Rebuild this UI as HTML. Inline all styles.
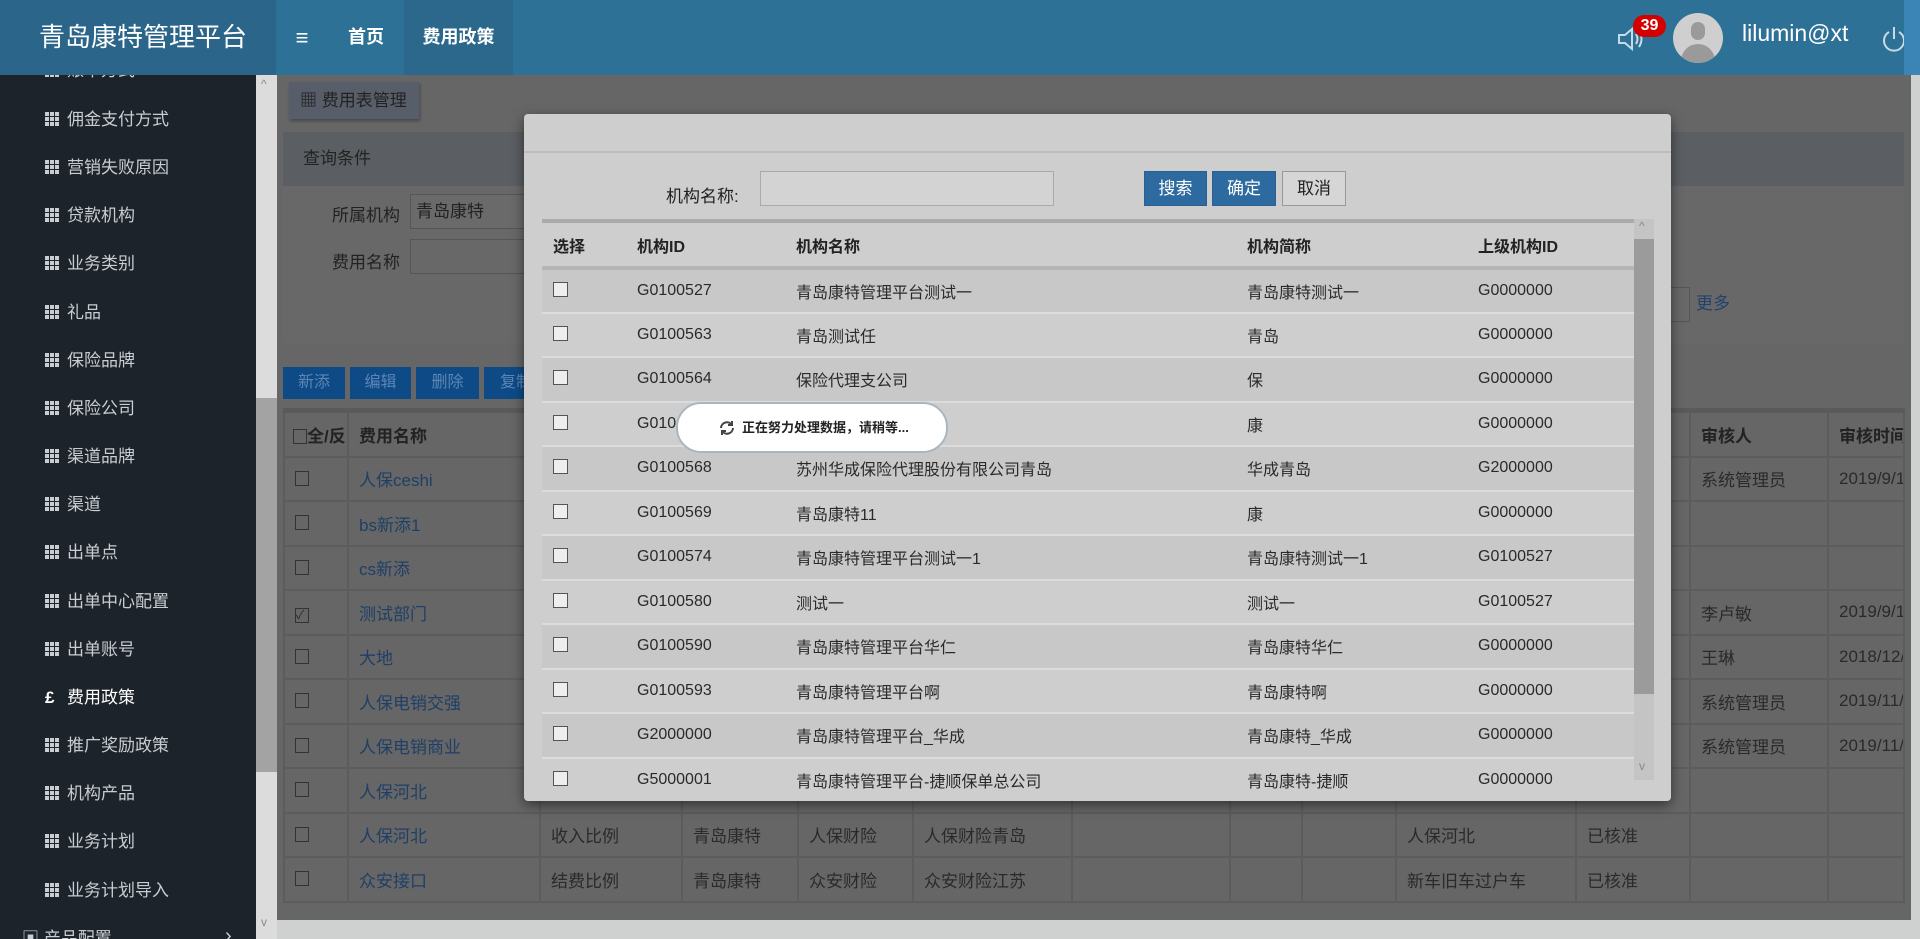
<!DOCTYPE html>
<html><head><meta charset="utf-8"><style>
*{margin:0;padding:0;box-sizing:border-box}
body{width:1920px;height:939px;overflow:hidden;position:relative;background:#666;font-family:"Liberation Sans","Noto Sans CJK SC",sans-serif;}
.a{position:absolute}
#hdr{left:0;top:0;width:1920px;height:75px;background:#2e7196}
#logo{left:0;top:0;width:276px;height:75px;background:#2b6589;color:#fff;font-size:26px;line-height:75px;padding-left:39px}
.nav{top:0;height:75px;line-height:75px;color:#fff;font-size:18px;font-weight:bold;text-align:center}
#side{left:0;top:75px;width:256px;height:864px;background:#1c232a;overflow:hidden}
.si{position:absolute;left:45px;color:#c9cdd1;font-size:17px;height:24px;line-height:24px}
.si i{display:inline-block;width:14px;height:14px;margin-right:8px;vertical-align:-1px;background:
linear-gradient(90deg,#c9cdd1 0 4px,transparent 4px 5px,#c9cdd1 5px 9px,transparent 9px 10px,#c9cdd1 10px 14px);
-webkit-mask:linear-gradient(#000 0 4px,transparent 4px 5px,#000 5px 9px,transparent 9px 10px,#000 10px 14px)}
#vs{left:256px;top:75px;width:21px;height:864px;background:#dcdcdc}
table{border-collapse:collapse;table-layout:fixed}
#bt{left:283px;top:408px;width:1621px;font-size:17px;color:#2a2a2a}
#bt td{height:44.5px;border:2px solid #5c5c5c;padding-left:10px;white-space:nowrap;overflow:hidden}
#bt tr.h td{height:46px;font-weight:bold;border-top:5px solid #5a5a5a;color:#222}
.lk{color:#1f3f66}
.cb{display:inline-block;width:14px;height:15px;border:1px solid #333;vertical-align:-2px}
#modal{left:524px;top:114px;width:1147px;height:687px;background:#cecece;border-radius:4px;box-shadow:0 4px 12px rgba(0,0,0,.5)}
#mt{position:absolute;left:18px;top:105px;width:1092px;font-size:16px;color:#2a2a2a}
#mt td{height:44.5px;border-bottom:2px solid #dcdcdc;white-space:nowrap;padding-left:11px}
#mt tr:nth-child(even) td{background:#c8c8c8}
#mt tr.h td{height:47px;font-weight:bold;border-top:4px solid #aaa;border-bottom:4px solid #b5b5b5;background:#cecece;color:#222}
.mcb{display:inline-block;width:15px;height:15px;border:1px solid #555;background:#eee;vertical-align:-2px}
.btn{position:absolute;top:57px;height:35px;line-height:33px;text-align:center;font-size:17px;border:1px solid #999}
</style></head><body>
<div id="hdr" class="a"></div>
<div id="logo" class="a">青岛康特管理平台</div>
<div class="a nav" style="left:276px;width:52px;font-size:22px">&#8801;</div>
<div class="a nav" style="left:328px;width:76px">首页</div>
<div class="a nav" style="left:404px;width:109px;background:#2b688c">费用政策</div>
<svg class="a" style="left:1616px;top:24px" width="30" height="30" viewBox="0 0 30 30" fill="none" stroke="#c7dbe6" stroke-width="2"><path d="M3 11h6l7-6v20l-7-6H3z"/><path d="M20 10q3 5 0 10M23 7q5 8 0 16"/></svg>
<div class="a" style="left:1633px;top:15px;width:33px;height:22px;border-radius:11px;background:#d40000;color:#fff;font-weight:bold;font-size:16px;line-height:22px;text-align:center">39</div>
<div class="a" style="left:1673px;top:13px;width:50px;height:50px;border-radius:50%;background:#cfcfcf;overflow:hidden"><div class="a" style="left:18px;top:9px;width:14px;height:18px;border-radius:7px;background:#9a9a9a"></div><div class="a" style="left:8px;top:31px;width:34px;height:26px;border-radius:17px 17px 0 0;background:#9a9a9a"></div></div>
<div class="a" style="left:1742px;top:20px;color:#fff;font-size:23px">lilumin@xt</div>
<svg class="a" style="left:1880px;top:24px" width="28" height="30" viewBox="0 0 28 30" fill="none" stroke="#c7dbe6" stroke-width="2"><path d="M9 8a10 10 0 1 0 10 0"/><path d="M14 3v12"/></svg>
<div class="a" style="left:1904px;top:0;width:16px;height:75px;background:#3a85b5"></div>

<div id="side" class="a">
<div class="si" style="top:-16px"><i></i>账单方式</div>
<div class="si" style="top:33px"><i></i>佣金支付方式</div>
<div class="si" style="top:81px"><i></i>营销失败原因</div>
<div class="si" style="top:129px"><i></i>贷款机构</div>
<div class="si" style="top:177px"><i></i>业务类别</div>
<div class="si" style="top:226px"><i></i>礼品</div>
<div class="si" style="top:274px"><i></i>保险品牌</div>
<div class="si" style="top:322px"><i></i>保险公司</div>
<div class="si" style="top:370px"><i></i>渠道品牌</div>
<div class="si" style="top:418px"><i></i>渠道</div>
<div class="si" style="top:466px"><i></i>出单点</div>
<div class="si" style="top:515px"><i></i>出单中心配置</div>
<div class="si" style="top:563px"><i></i>出单账号</div>
<div class="si" style="top:611px;color:#fff"><b style="display:inline-block;width:14px;margin-right:8px">£</b>费用政策</div>
<div class="si" style="top:659px"><i></i>推广奖励政策</div>
<div class="si" style="top:707px"><i></i>机构产品</div>
<div class="si" style="top:755px"><i></i>业务计划</div>
<div class="si" style="top:804px"><i></i>业务计划导入</div>
<div class="si" style="top:852px;left:22px">&#9635; 产品配置</div>
<div class="a" style="left:225px;top:850px;color:#c9cdd1;font-size:20px">&#8250;</div>
</div>
<div id="vs" class="a"><div class="a" style="left:0;top:323px;width:21px;height:374px;background:#a3a3a3"></div><div class="a" style="left:5px;top:2px;color:#888;font-size:12px">^</div><div class="a" style="left:5px;top:840px;color:#888;font-size:12px">v</div></div>

<div class="a" style="left:277px;top:920px;width:1643px;height:19px;background:#cfd0d0"></div>
<div class="a" style="left:1911px;top:75px;width:9px;height:864px;background:#cfd0d0"></div>

<div class="a" style="left:289px;top:82px;width:130px;height:37px;background:#575e69;color:#222;font-size:17px;line-height:37px;padding-left:11px;box-shadow:1px 2px 3px rgba(0,0,0,.3)"><span style="font-weight:bold">&#9638;</span> 费用表管理</div>
<div class="a" style="left:283px;top:132px;width:1621px;height:54px;background:#5b5e62;color:#222;font-size:17px;line-height:54px;padding-left:20px">查询条件</div>
<div class="a" style="left:283px;top:186px;width:1621px;height:157px;background:#686868"></div>
<div class="a" style="left:332px;top:201px;font-size:17px;color:#222">所属机构</div>
<div class="a" style="left:410px;top:194px;width:130px;height:35px;border:1px solid #555;background:#6a6a6a;font-size:17px;line-height:33px;padding-left:5px;color:#222">青岛康特</div>
<div class="a" style="left:332px;top:248px;font-size:17px;color:#222">费用名称</div>
<div class="a" style="left:410px;top:239px;width:130px;height:35px;border:1px solid #555"></div>
<div class="a" style="left:1660px;top:287px;width:30px;height:35px;border:1px solid #555"></div>
<div class="a" style="left:1696px;top:289px;font-size:17px;color:#23426a">更多</div>
<div class="a" style="left:283px;top:367px;width:62px;height:32px;background:#0d4a86;color:#5d86b5;font-size:16px;line-height:32px;text-align:center">新添</div>
<div class="a" style="left:350px;top:367px;width:61px;height:32px;background:#0d4a86;color:#5d86b5;font-size:16px;line-height:32px;text-align:center">编辑</div>
<div class="a" style="left:416px;top:367px;width:63px;height:32px;background:#0d4a86;color:#5d86b5;font-size:16px;line-height:32px;text-align:center">删除</div>
<div class="a" style="left:484px;top:367px;width:63px;height:32px;background:#0d4a86;color:#5d86b5;font-size:16px;line-height:32px;padding-left:16px">复制</div>

<table id="bt" class="a">
<colgroup><col style="width:64px"><col style="width:192px"><col style="width:142px"><col style="width:116px"><col style="width:115px"><col style="width:159px"><col style="width:158px"><col style="width:72px"><col style="width:94px"><col style="width:180px"><col style="width:114px"><col style="width:138px"><col style="width:76px"></colgroup>
<tr class="h"><td style="padding-left:8px"><span class="cb"></span>全/反</td><td>费用名称</td><td></td><td></td><td></td><td></td><td></td><td></td><td></td><td></td><td></td><td>审核人</td><td>审核时间</td></tr>
<tr><td><span class="cb"></span></td><td class="lk">人保ceshi</td><td></td><td></td><td></td><td></td><td></td><td></td><td></td><td></td><td></td><td>系统管理员</td><td>2019/9/12</td></tr>
<tr><td><span class="cb"></span></td><td class="lk">bs新添1</td><td></td><td></td><td></td><td></td><td></td><td></td><td></td><td></td><td></td><td></td><td></td></tr>
<tr><td><span class="cb"></span></td><td class="lk">cs新添</td><td></td><td></td><td></td><td></td><td></td><td></td><td></td><td></td><td></td><td></td><td></td></tr>
<tr><td><span class="cb" style="font-size:12px;line-height:13px">&#10003;</span></td><td class="lk">测试部门</td><td></td><td></td><td></td><td></td><td></td><td></td><td></td><td></td><td></td><td>李卢敏</td><td>2019/9/12</td></tr>
<tr><td><span class="cb"></span></td><td class="lk">大地</td><td></td><td></td><td></td><td></td><td></td><td></td><td></td><td></td><td></td><td>王琳</td><td>2018/12/4</td></tr>
<tr><td><span class="cb"></span></td><td class="lk">人保电销交强</td><td></td><td></td><td></td><td></td><td></td><td></td><td></td><td></td><td></td><td>系统管理员</td><td>2019/11/2</td></tr>
<tr><td><span class="cb"></span></td><td class="lk">人保电销商业</td><td></td><td></td><td></td><td></td><td></td><td></td><td></td><td></td><td></td><td>系统管理员</td><td>2019/11/2</td></tr>
<tr><td><span class="cb"></span></td><td class="lk">人保河北</td><td></td><td></td><td></td><td></td><td></td><td></td><td></td><td></td><td></td><td></td><td></td></tr>
<tr><td><span class="cb"></span></td><td class="lk">人保河北</td><td>收入比例</td><td>青岛康特</td><td>人保财险</td><td>人保财险青岛</td><td></td><td></td><td></td><td>人保河北</td><td>已核准</td><td></td><td></td></tr>
<tr><td><span class="cb"></span></td><td class="lk">众安接口</td><td>结费比例</td><td>青岛康特</td><td>众安财险</td><td>众安财险江苏</td><td></td><td></td><td></td><td>新车旧车过户车</td><td>已核准</td><td></td><td></td></tr>
</table>

<div id="modal" class="a">
<div class="a" style="left:0;top:37px;width:1147px;height:2px;background:#bdbdbd"></div>
<div class="a" style="left:142px;top:68px;font-size:17px;color:#222">机构名称:</div>
<div class="a" style="left:236px;top:57px;width:294px;height:35px;border:1px solid #aaa;background:#d3d3d3"></div>
<div class="btn" style="left:620px;width:63px;background:#2d6aa0;color:#fff;border-color:#2a5f8f">搜索</div>
<div class="btn" style="left:688px;width:64px;background:#2d6aa0;color:#fff;border-color:#2a5f8f">确定</div>
<div class="btn" style="left:758px;width:64px;background:#d6d6d6;color:#222">取消</div>
<div style="position:absolute;left:18px;top:105px;width:1092px;height:576px;overflow:hidden">
<table id="mt" style="position:static">
<colgroup><col style="width:84px"><col style="width:159px"><col style="width:451px"><col style="width:231px"><col style="width:167px"></colgroup>
<tr class="h"><td>选择</td><td>机构ID</td><td>机构名称</td><td>机构简称</td><td>上级机构ID</td></tr>
<tr><td><span class="mcb"></span></td><td>G0100527</td><td>青岛康特管理平台测试一</td><td>青岛康特测试一</td><td>G0000000</td></tr>
<tr><td><span class="mcb"></span></td><td>G0100563</td><td>青岛测试任</td><td>青岛</td><td>G0000000</td></tr>
<tr><td><span class="mcb"></span></td><td>G0100564</td><td>保险代理支公司</td><td>保</td><td>G0000000</td></tr>
<tr><td><span class="mcb"></span></td><td>G0100567</td><td>青岛康特</td><td>康</td><td>G0000000</td></tr>
<tr><td><span class="mcb"></span></td><td>G0100568</td><td>苏州华成保险代理股份有限公司青岛</td><td>华成青岛</td><td>G2000000</td></tr>
<tr><td><span class="mcb"></span></td><td>G0100569</td><td>青岛康特11</td><td>康</td><td>G0000000</td></tr>
<tr><td><span class="mcb"></span></td><td>G0100574</td><td>青岛康特管理平台测试一1</td><td>青岛康特测试一1</td><td>G0100527</td></tr>
<tr><td><span class="mcb"></span></td><td>G0100580</td><td>测试一</td><td>测试一</td><td>G0100527</td></tr>
<tr><td><span class="mcb"></span></td><td>G0100590</td><td>青岛康特管理平台华仁</td><td>青岛康特华仁</td><td>G0000000</td></tr>
<tr><td><span class="mcb"></span></td><td>G0100593</td><td>青岛康特管理平台啊</td><td>青岛康特啊</td><td>G0000000</td></tr>
<tr><td><span class="mcb"></span></td><td>G2000000</td><td>青岛康特管理平台_华成</td><td>青岛康特_华成</td><td>G0000000</td></tr>
<tr><td><span class="mcb"></span></td><td>G5000001</td><td>青岛康特管理平台-捷顺保单总公司</td><td>青岛康特-捷顺</td><td>G0000000</td></tr>
</table></div>
<div class="a" style="left:1110px;top:105px;width:20px;height:561px;background:#c4c4c4"><div class="a" style="left:0;top:20px;width:20px;height:455px;background:#9b9b9b"></div><div class="a" style="left:5px;top:0;color:#888;font-size:12px">^</div><div class="a" style="left:5px;top:540px;color:#888;font-size:12px">v</div></div>
</div>

<div class="a" style="left:676px;top:402px;width:272px;height:51px;background:#fff;border:2px solid #a9b6bf;border-radius:25px;font-size:13px;font-weight:bold;color:#222;line-height:47px;padding-left:40px">
<svg class="a" style="left:40px;top:15px" width="18" height="18" viewBox="0 0 18 18" fill="none" stroke="#444" stroke-width="2"><path d="M3 9a6 6 0 0 1 11-3M15 9a6 6 0 0 1-11 3"/><path d="M14 2v4h-4M4 16v-4h4"/></svg>
<span style="margin-left:24px">正在努力处理数据，请稍等...</span></div>
</body></html>
